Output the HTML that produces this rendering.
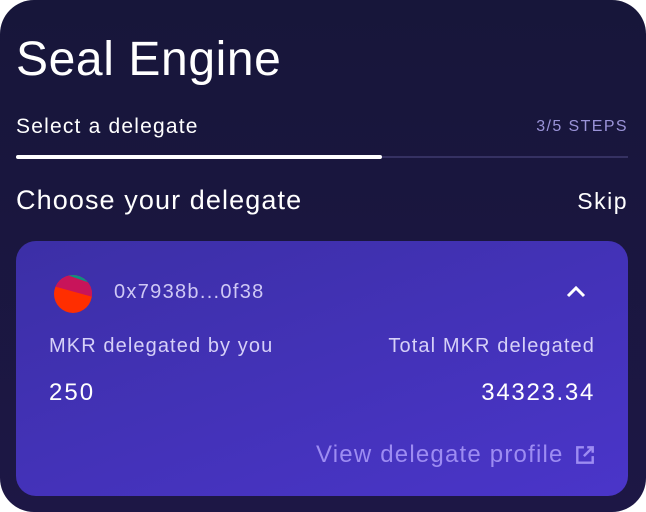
<!DOCTYPE html>
<html><head><style>
body{margin:0;background:#fff;width:646px;height:512px;overflow:hidden;font-family:"Liberation Sans",sans-serif}
.o{position:absolute;left:0;top:0;width:646px;height:512px;border-radius:34px;background:linear-gradient(180deg,#17163a,#1d1745)}
.t{position:absolute;color:#fff;white-space:nowrap}
.card{position:absolute;left:16px;top:241px;width:612px;height:255px;border-radius:20px;background:linear-gradient(160deg,#3c2fa6,#4a35c9)}
</style></head><body>
<div class="o">
<div class="t" style="left:16px;top:32px;font-size:48px;letter-spacing:0.6px">Seal Engine</div>
<div class="t" style="left:16px;top:115px;font-size:21px;letter-spacing:1.2px">Select a delegate</div>
<div class="t" style="right:18px;top:118px;font-size:16px;letter-spacing:1.4px;color:#9a93d8">3/5 STEPS</div>
<div style="position:absolute;left:16px;top:156px;width:612px;height:2px;background:#353162"></div>
<div style="position:absolute;left:16px;top:155px;width:366px;height:4px;border-radius:2px;background:#fff"></div>
<div class="t" style="left:16px;top:185px;font-size:27px;letter-spacing:1.1px">Choose your delegate</div>
<div class="t" style="right:18px;top:188px;font-size:23px;letter-spacing:1.5px">Skip</div>
<div class="card">
<svg style="position:absolute;left:37px;top:33px" width="40" height="40" viewBox="0 0 40 40"><defs><clipPath id="c"><circle cx="20" cy="20" r="19"/></clipPath></defs><g clip-path="url(#c)"><rect width="40" height="40" fill="#ff2e00"/><polygon points="0,0 40,0 40,23 0,12" fill="#c8145a"/><polygon points="0,0 40,0 40,10 14,1" fill="#0d9080"/></g></svg>
<div class="t" style="left:98px;top:40px;font-size:20px;letter-spacing:1.3px;color:#cfc8f5">0x7938b...0f38</div>
<svg style="position:absolute;left:550px;top:44px" width="20" height="14" viewBox="0 0 20 14"><path d="M2 11 L10 3 L18 11" stroke="#fff" stroke-width="3" fill="none"/></svg>
<div class="t" style="left:33px;top:94px;font-size:20px;letter-spacing:1.1px;color:#d6d0f8">MKR delegated by you</div>
<div class="t" style="right:33px;top:94px;font-size:20px;letter-spacing:1.1px;color:#d6d0f8">Total MKR delegated</div>
<div class="t" style="left:33px;top:138px;font-size:24px;letter-spacing:2px">250</div>
<div class="t" style="right:33px;top:138px;font-size:24px;letter-spacing:1.7px">34323.34</div>
<div class="t" style="left:300px;top:200px;font-size:24px;letter-spacing:1.2px;color:#9d8cf2">View delegate profile</div>
<svg style="position:absolute;left:558px;top:203px" width="22" height="22" viewBox="0 0 20 20"><path d="M9 3H3V17H17V11M12 3H17V8M17 3L9 11" stroke="#9d8cf2" stroke-width="2.2" fill="none"/></svg>
</div>
</div>
</body></html>
